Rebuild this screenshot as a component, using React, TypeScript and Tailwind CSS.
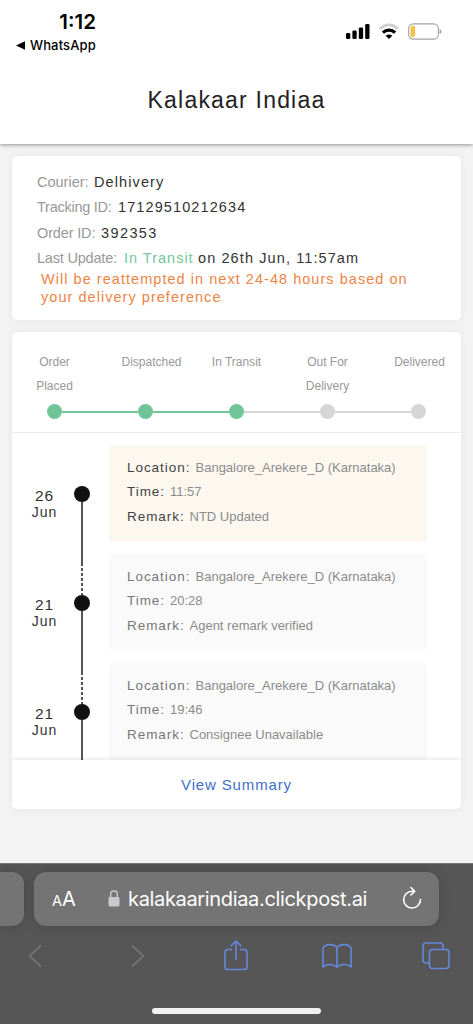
import clsx from "clsx";

type Event = {
  day: string;
  month: string;
  location: string;
  time: string;
  remark: string;
};

const STEPS = [
  { label: "Order Placed", done: true, className: "w-[50px]" },
  { label: "Dispatched", done: true, className: "w-[70px] translate-x-[6px]" },
  { label: "In Transit", done: true, className: "w-[60px]" },
  { label: "Out For Delivery", done: false, className: "w-[50px]" },
  { label: "Delivered", done: false, className: "w-[60px] translate-x-[1px]" },
];

const EVENTS: Event[] = [
  {
    day: "26",
    month: "Jun",
    location: "Bangalore_Arekere_D (Karnataka)",
    time: "11:57",
    remark: "NTD Updated",
  },
  {
    day: "21",
    month: "Jun",
    location: "Bangalore_Arekere_D (Karnataka)",
    time: "20:28",
    remark: "Agent remark verified",
  },
  {
    day: "21",
    month: "Jun",
    location: "Bangalore_Arekere_D (Karnataka)",
    time: "19:46",
    remark: "Consignee Unavailable",
  },
];

function StatusBar() {
  return (
    <div className="flex h-[60px] justify-between font-[Inter,sans-serif] text-black">
      <div className="flex w-[96px] flex-col items-end pt-[10px]">
        <div className="text-[20.5px] leading-[24px] font-semibold">1:12</div>
        <div className="flex items-center gap-[5px] text-[13px] leading-[22px] font-medium tracking-[0.15px]">
          <svg width="9" height="9" viewBox="0 0 9 9">
            <path d="M0 4.5 9 0.3v8.4z" />
          </svg>
          WhatsApp
        </div>
      </div>
      <div className="flex items-start pt-[23px] pr-[31px]">
        <svg width="25" height="16" viewBox="0 0 25 16" className="mr-[8px]">
          <rect x="0" y="10" width="4.3" height="6" rx="1.3" />
          <rect x="6.4" y="7.4" width="4.3" height="8.6" rx="1.3" />
          <rect x="12.8" y="4.4" width="4.3" height="11.6" rx="1.3" />
          <rect x="19.2" y="1" width="4.3" height="15" rx="1.3" />
        </svg>
        <svg width="21" height="16" viewBox="0 0 21 16" className="mr-[8px]" fill="none">
          <path d="M1 5.7C6.200 0.500 13.800 0.500 19 5.700" stroke="#cfcfcf" strokeWidth="2.700" />
          <path d="M3.900 9.600C7.300 6.300 12.700 6.300 16.100 9.600" stroke="#000" strokeWidth="3.100" />
          <path d="M6.700 12.800C8.600 11.100 11.400 11.100 13.300 12.800L10 16z" fill="#000" />
        </svg>
        <svg width="34" height="17" viewBox="0 0 34 17" fill="none">
          <rect x="0.7" y="0.9" width="29.6" height="15.2" rx="4.6" stroke="#a3a3a3" strokeWidth="1.1" />
          <rect x="2.5" y="2.7" width="4.6" height="11.4" rx="2" fill="#f5c242" />
          <path d="M31.6 6v5.2c1-.4 1.7-1.4 1.7-2.6s-.7-2.2-1.7-2.6z" fill="#9a9a9a" />
        </svg>
      </div>
    </div>
  );
}

function Details() {
  return (
    <section className="h-[164px] rounded-[5px] bg-white pt-[14px] pl-[25px] text-[14.5px] leading-[25.4px] text-[#999] shadow-[0_0_10px_rgba(0,0,0,0.06)]">
      <div className="flex">
        <span className="w-[57px]">Courier:</span>
        <span className="tracking-[1.1px] text-[#333]">Delhivery</span>
      </div>
      <div className="flex">
        <span className="w-[81px] tracking-[-0.25px] whitespace-nowrap">Tracking ID:</span>
        <span className="tracking-[1.1px] text-[#333]">17129510212634</span>
      </div>
      <div className="flex">
        <span className="w-[64px] tracking-[-0.15px] whitespace-nowrap">Order ID:</span>
        <span className="tracking-[1.4px] text-[#333]">392353</span>
      </div>
      <div className="flex">
        <span className="w-[87px] tracking-[-0.2px] whitespace-nowrap">Last Update:</span>
        <span className="w-[74px] tracking-[1px] whitespace-nowrap text-[#75c69a]">In Transit</span>
        <span className="tracking-[1.1px] whitespace-nowrap text-[#333]">on 26th Jun, 11:57am</span>
      </div>
      <p className="-mt-[2px] ml-[4px] leading-[18px] tracking-[1.04px] text-[#ee8445]">
        Will be reattempted in next 24-48 hours based on
        <br />
        your delivery preference
      </p>
    </section>
  );
}

function Progress() {
  return (
    <div className="h-[101px] border-b border-[#ebebeb] pt-[18px]">
      <div className="flex h-[54px] text-center text-[12px] leading-[24px] text-[#999]">
        {STEPS.map((s, i) => (
          <div
            key={s.label}
            className={clsx("flex w-[91px] shrink-0 justify-center", i === 0 && "-ml-[3px]")}
          >
            <span className={clsx("shrink-0", s.className)}>{s.label}</span>
          </div>
        ))}
      </div>
      <div className="flex items-center pl-[35px]">
        {STEPS.map((s, i) => (
          <div key={s.label} className="flex items-center">
            {i > 0 && (
              <div className={clsx("h-[2px] w-[76px]", s.done ? "bg-[#70c598]" : "bg-[#d6d6d6]")} />
            )}
            <div
              className={clsx("size-[15px] rounded-full", s.done ? "bg-[#70c598]" : "bg-[#d6d6d6]")}
            />
          </div>
        ))}
      </div>
    </div>
  );
}

function EventRow({ event, first }: { event: Event; first: boolean }) {
  const label = clsx("text-[13.5px] tracking-[0.95px]", first ? "text-[#444]" : "text-[#777]");

  return (
    <div className="flex h-[109px] shrink-0">
      <div className="w-[61px] pt-[42px] pl-[4px] text-center tracking-[1px] text-[#333]">
        <div className="text-[15.5px] leading-[17px]">{event.day}</div>
        <div className="text-[14px] leading-[16px]">{event.month}</div>
      </div>
      <div className="flex w-[18px] flex-col items-center">
        <div className={clsx("h-[12px] w-[2px]", !first && "bg-[#555]")} />
        <div
          className={clsx(
            "h-[29px] w-[2px]",
            !first &&
              "bg-[repeating-linear-gradient(to_bottom,transparent_0_2px,#555_2px_5px)]"
          )}
        />
        <div className="size-[16px] shrink-0 rounded-full bg-[#111]" />
        <div className="w-[2px] flex-1 bg-[#555]" />
      </div>
      <div
        className={clsx(
          "ml-[18px] h-[97px] w-[318px] rounded-[4px] pt-[11px] pl-[18px] text-[13px] leading-[24.4px] whitespace-nowrap text-[#8c8c8c]",
          first ? "bg-[#fdf8ef]" : "bg-[#fafafa]"
        )}
      >
        <div className="flex">
          <span className={clsx("w-[68.5px]", label)}>Location:</span>
          <span>{event.location}</span>
        </div>
        <div className="flex">
          <span className={clsx("w-[43px]", label)}>Time:</span>
          <span>{event.time}</span>
        </div>
        <div className="flex">
          <span className={clsx("w-[62.5px]", label)}>Remark:</span>
          <span>{event.remark}</span>
        </div>
      </div>
    </div>
  );
}

function BrowserBar() {
  return (
    <footer className="flex h-[161px] flex-col border-t border-[#777] bg-[#565656] font-[Inter,sans-serif]">
      <div className="mt-[8px] flex gap-[10px]">
        <div className="h-[54px] w-[24px] rounded-r-[12px] bg-[#747474] shadow-[0_0_12px_rgba(0,0,0,0.16)]" />
        <div className="flex h-[54px] w-[405px] items-center rounded-[12px] bg-[#747474] text-white shadow-[0_0_12px_rgba(0,0,0,0.16)]">
          <div className="flex w-[74px] items-baseline pl-[18px]">
            <span className="text-[14.5px]">A</span>
            <span className="text-[20px]">A</span>
          </div>
          <svg width="12" height="17" viewBox="0 0 12 17" className="-mt-[1px]">
            <rect x="0.5" y="7" width="11" height="9.5" rx="1.4" fill="#c9c8cc" />
            <path d="M2.7 7.5V4.3a3.3 3.3 0 0 1 6.6 0v3.2" fill="none" stroke="#c9c8cc" strokeWidth="1.4" />
          </svg>
          <span className="ml-[8px] w-[238px] text-[20px] tracking-[-0.34px] whitespace-nowrap">
            kalakaarindiaa.clickpost.ai
          </span>
          <svg
            width="20"
            height="24"
            viewBox="0 0 20 24"
            className="-mt-[2px] ml-[36px]"
            fill="none"
            stroke="#fff"
            strokeWidth="1.6"
            strokeLinecap="round"
            strokeLinejoin="round"
          >
            <path d="M12.2 5.2H10a8.4 8.4 0 1 0 8.5 8.4" />
            <path d="M9 1.5l3.700 3.700-3.700 3.700" />
          </svg>
        </div>
      </div>
      <div className="mt-[14px] flex h-[32px] items-center pl-[28px]">
        <svg width="14" height="24" viewBox="0 0 14 24" fill="none" stroke="#737373" strokeWidth="1.7">
          <path d="M13 1.5 1.5 12 13 22.5" />
        </svg>
        <svg width="14" height="24" viewBox="0 0 14 24" className="ml-[89px]" fill="none" stroke="#737373" strokeWidth="1.7">
          <path d="M1 1.5 12.5 12 1 22.5" />
        </svg>
        <svg
          width="24"
          height="32"
          viewBox="0 0 24 32"
          className="ml-[79px]"
          fill="none"
          stroke="#6389dc"
          strokeWidth="1.6"
          strokeLinecap="round"
          strokeLinejoin="round"
        >
          <path d="M7.5 9.5H3.7A2.7 2.7 0 0 0 1 12.2v14.6A2.7 2.7 0 0 0 3.7 29.5h16.6a2.7 2.7 0 0 0 2.7-2.7V12.2a2.7 2.7 0 0 0-2.7-2.7h-3.8" />
          <path d="M12 19.5V1.3M7 6l5-5 5 5" />
        </svg>
        <svg
          width="30"
          height="26"
          viewBox="0 0 30 26"
          className="ml-[74px]"
          fill="none"
          stroke="#6389dc"
          strokeWidth="1.6"
          strokeLinejoin="round"
        >
          <path d="M15 24.5V4.8C12.5.5 3.5.5 1 4.8V24C4 20.5 12 20.5 15 24.5" />
          <path d="M15 4.8C17.5.5 26.5.5 29 4.8V24C26 20.5 18 20.5 15 24.5" />
        </svg>
        <svg
          width="28"
          height="28"
          viewBox="0 0 28 28"
          className="ml-[70px]"
          fill="none"
          stroke="#6389dc"
          strokeWidth="1.6"
        >
          <path d="M7.5 21H4a3 3 0 0 1-3-3V4a3 3 0 0 1 3-3h14a3 3 0 0 1 3 3v3.5" />
          <rect x="7.5" y="7.5" width="19.5" height="19" rx="3" />
        </svg>
      </div>
      <div className="mt-[36px] ml-[152px] h-[6px] w-[169px] rounded-full bg-[#f1f1f1]" />
    </footer>
  );
}

export default function App() {
  return (
    <div className="flex h-[1024px] w-[473px] flex-col overflow-hidden bg-[#f3f3f3] font-['Liberation_Sans',Arial,sans-serif]">
      <header className="z-10 h-[144px] shrink-0 bg-white shadow-[0_1px_4px_rgba(0,0,0,0.4)]">
        <StatusBar />
        <h1 className="pt-[24px] text-center text-[23px] leading-[32px] tracking-[1.2px] text-[#222]">
          Kalakaar Indiaa
        </h1>
      </header>

      <main className="flex flex-1 flex-col gap-[12px] px-[12px] pt-[12px]">
        <Details />
        <section className="flex h-[477px] flex-col overflow-hidden rounded-[5px] bg-white shadow-[0_0_10px_rgba(0,0,0,0.06)]">
          <Progress />
          <div className="h-[327px] overflow-hidden pt-[12px]">
            {EVENTS.map((e, i) => (
              <EventRow key={i} event={e} first={i === 0} />
            ))}
          </div>
          <button className="h-[49px] pt-[2px] text-[15px] tracking-[0.85px] text-[#3f70ca] shadow-[0_-1px_4px_rgba(0,0,0,0.1)]">
            View Summary
          </button>
        </section>
      </main>

      <BrowserBar />
    </div>
  );
}
